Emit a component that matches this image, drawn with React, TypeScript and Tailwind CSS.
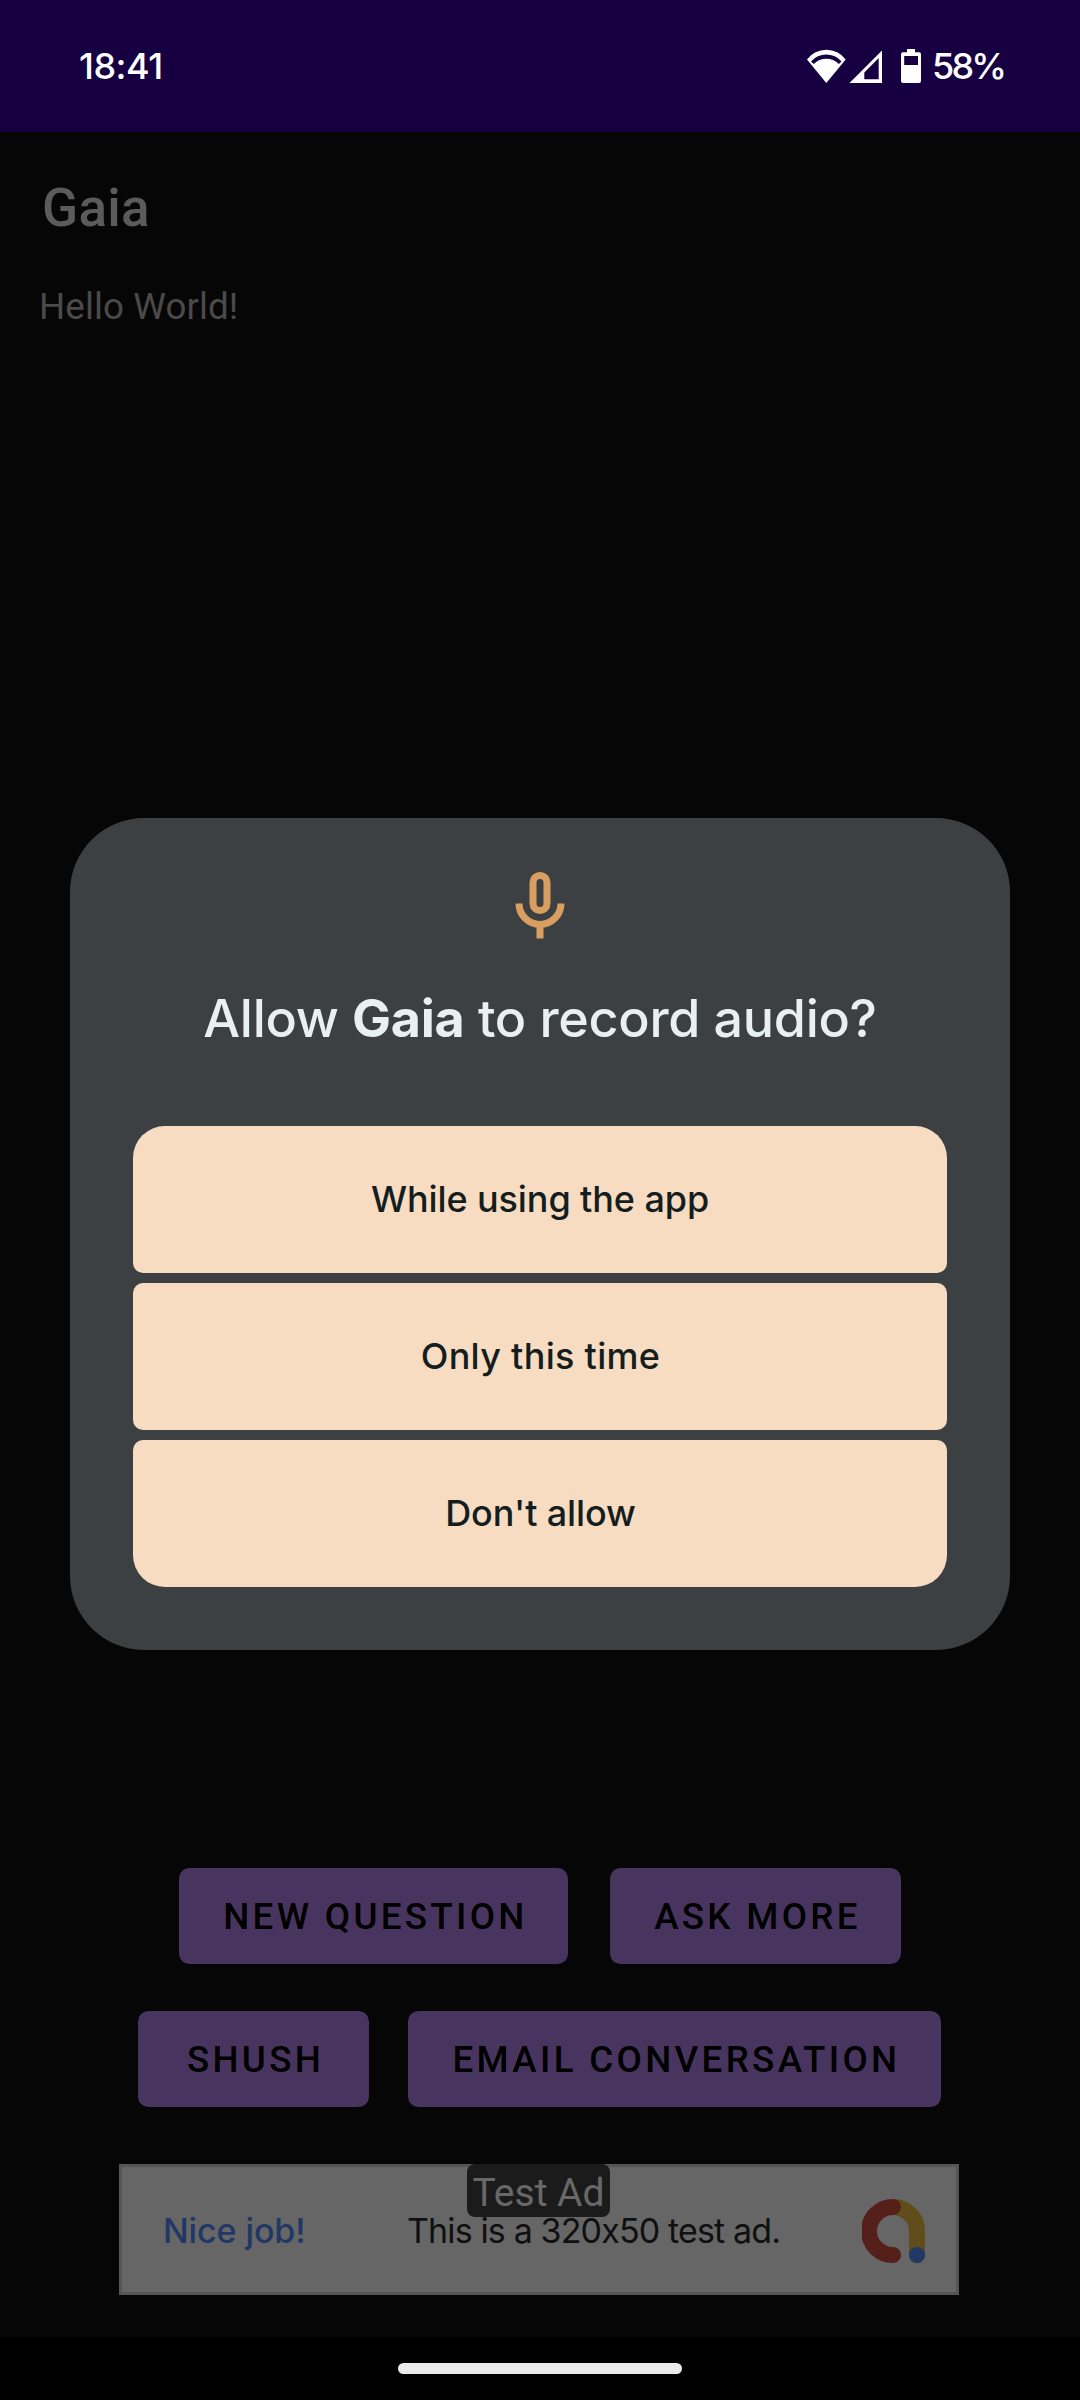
import React from "react";

function WifiIcon() {
  return (
    <svg className="h-[35px] w-[41px]" viewBox="0 0 41 35" fill="#fff">
      <path
        fillRule="evenodd"
        d="M1 10.5A24 24 0 0 1 39.7 10.5L20.3 34ZM5 12.4L7.8 15A17.5 17.5 0 0 1 32.8 15L35.6 12.4A20.2 20.2 0 0 0 5 12.4Z"
      />
    </svg>
  );
}

function SignalIcon() {
  return (
    <svg className="ml-[2px] h-[35px] w-[33px]" viewBox="0 0 33 35" fill="#fff">
      <path fillRule="evenodd" d="M0.5 34H33V1.5ZM15.3 30.2H29.7V9L15.3 23.4Z" />
    </svg>
  );
}

function BatteryIcon() {
  return (
    <svg className="ml-[19px] h-[35px] w-[20px]" viewBox="0 0 20 35" fill="#fff">
      <path
        fillRule="evenodd"
        d="M6 0H14V3.3H18Q20 3.3 20 5.3V32Q20 34 18 34H2Q0 34 0 32V5.3Q0 3.3 2 3.3H6ZM3.2 7V16H17V7Z"
      />
    </svg>
  );
}

function MicIcon() {
  return (
    <svg className="mx-auto size-[84px]" viewBox="0 0 24 24" fill="none" stroke="#d99f60" strokeWidth="2">
      <rect x="10" y="3" width="4" height="10" rx="2" />
      <path d="M6 11a6 6 0 0 0 12 0M12 17v4" />
    </svg>
  );
}

function AdLogo() {
  return (
    <svg className="h-[64px] w-[63px]" viewBox="0 0 63 64" fill="none" strokeWidth="16" strokeLinecap="round">
      <path d="M31 8A24 24 0 0 1 55 32V56" stroke="#604d1a" />
      <path d="M31 8A24 24 0 0 0 31 56" stroke="#551f1a" />
      <circle cx="55" cy="56" r="8" fill="#213765" />
    </svg>
  );
}

const appButton =
  "flex h-[96px] items-center justify-center rounded-[10.5px] bg-[#48355f] pt-[3px] pl-[4px] text-[36.75px] leading-none font-medium tracking-[3.3px] whitespace-nowrap text-black";

const dialogButton =
  "flex h-[147px] w-full items-center justify-center bg-[#f8dcc2] pb-[1px] text-[36px] leading-none font-medium text-[#141e1e]";

export default function App() {
  return (
    <div className="relative flex h-[2400px] w-[1080px] flex-col overflow-hidden bg-[#060606] font-['Roboto',sans-serif]">
      <header className="flex h-[132px] shrink-0 items-center bg-[#160042] pr-[75px] pl-[79px] font-['Inter',sans-serif] text-[36px] leading-none font-medium text-white">
        <span className="tracking-[-0.5px]">18:41</span>
        <div className="ml-auto flex items-center">
          <WifiIcon />
          <SignalIcon />
          <BatteryIcon />
          <span className="ml-[11px] w-[73px] tracking-[-2.8px]">58%</span>
        </div>
      </header>

      <main className="flex flex-1 flex-col">
        <h1 className="mt-[45px] ml-[42px] text-[53px] leading-[62px] font-medium tracking-[0.3px] text-[#5b5b5b]">Gaia</h1>
        <p className="mt-[46px] ml-[39px] text-[36.75px] leading-[43px] tracking-[0.1px] text-[#4a4a4a]">Hello World!</p>

        <div className="mt-auto flex gap-[42px] pl-[179px]">
          <button className={`${appButton} w-[389px]`}>NEW QUESTION</button>
          <button className={`${appButton} w-[291px]`}>ASK MORE</button>
        </div>
        <div className="mt-[47px] flex gap-[39px] pl-[138px]">
          <button className={`${appButton} w-[231px]`}>SHUSH</button>
          <button className={`${appButton} w-[533px]`}>EMAIL CONVERSATION</button>
        </div>

        <div className="relative mt-[57px] mb-[42px] ml-[119px] flex h-[131px] w-[840px] items-center border-[3px] border-[#555555] bg-[#666666] pt-[2px] pl-[41px] font-['Inter',sans-serif] text-[34px] leading-none">
          <span className="w-[244px] font-medium tracking-[-0.1px] text-[#213765]">Nice job!</span>
          <span className="w-[455px] tracking-[-0.86px] whitespace-nowrap text-[#101010]">This is a 320x50 test ad.</span>
          <AdLogo />
          <span className="absolute top-[-3px] left-[345px] flex h-[53px] w-[143px] items-center justify-center rounded-[8px] bg-[#1b1b1b] pt-[6px] font-['Roboto',sans-serif] text-[39px] text-[#686868]">
            Test Ad
          </span>
        </div>
      </main>

      <footer className="flex h-[63px] shrink-0 items-start justify-center bg-black pt-[26px]">
        <div className="h-[11px] w-[284px] rounded-full bg-[#eaeaea]" />
      </footer>

      <section
        role="dialog"
        className="absolute top-[818px] left-[70px] flex h-[832px] w-[940px] flex-col rounded-[74px] bg-[#3d4043] px-[63px] pt-[47px] pb-[63px] font-['Inter',sans-serif]"
      >
        <MicIcon />
        <h2 className="mt-[38px] text-center text-[52px] leading-[64px] font-medium tracking-[-0.3px] whitespace-nowrap text-[#e9f1f0]">
          Allow <b className="font-bold">Gaia</b> to record audio?
        </h2>
        <div className="mt-auto flex flex-col gap-[10px]">
          <button className={`${dialogButton} rounded-t-[32px] rounded-b-[10px] tracking-[-0.1px]`}>While using the app</button>
          <button className={`${dialogButton} rounded-[10px] pl-[1px] tracking-[0.3px]`}>Only this time</button>
          <button className={`${dialogButton} rounded-t-[10px] rounded-b-[32px] pl-[1px] tracking-[-0.1px]`}>Don't allow</button>
        </div>
      </section>
    </div>
  );
}
